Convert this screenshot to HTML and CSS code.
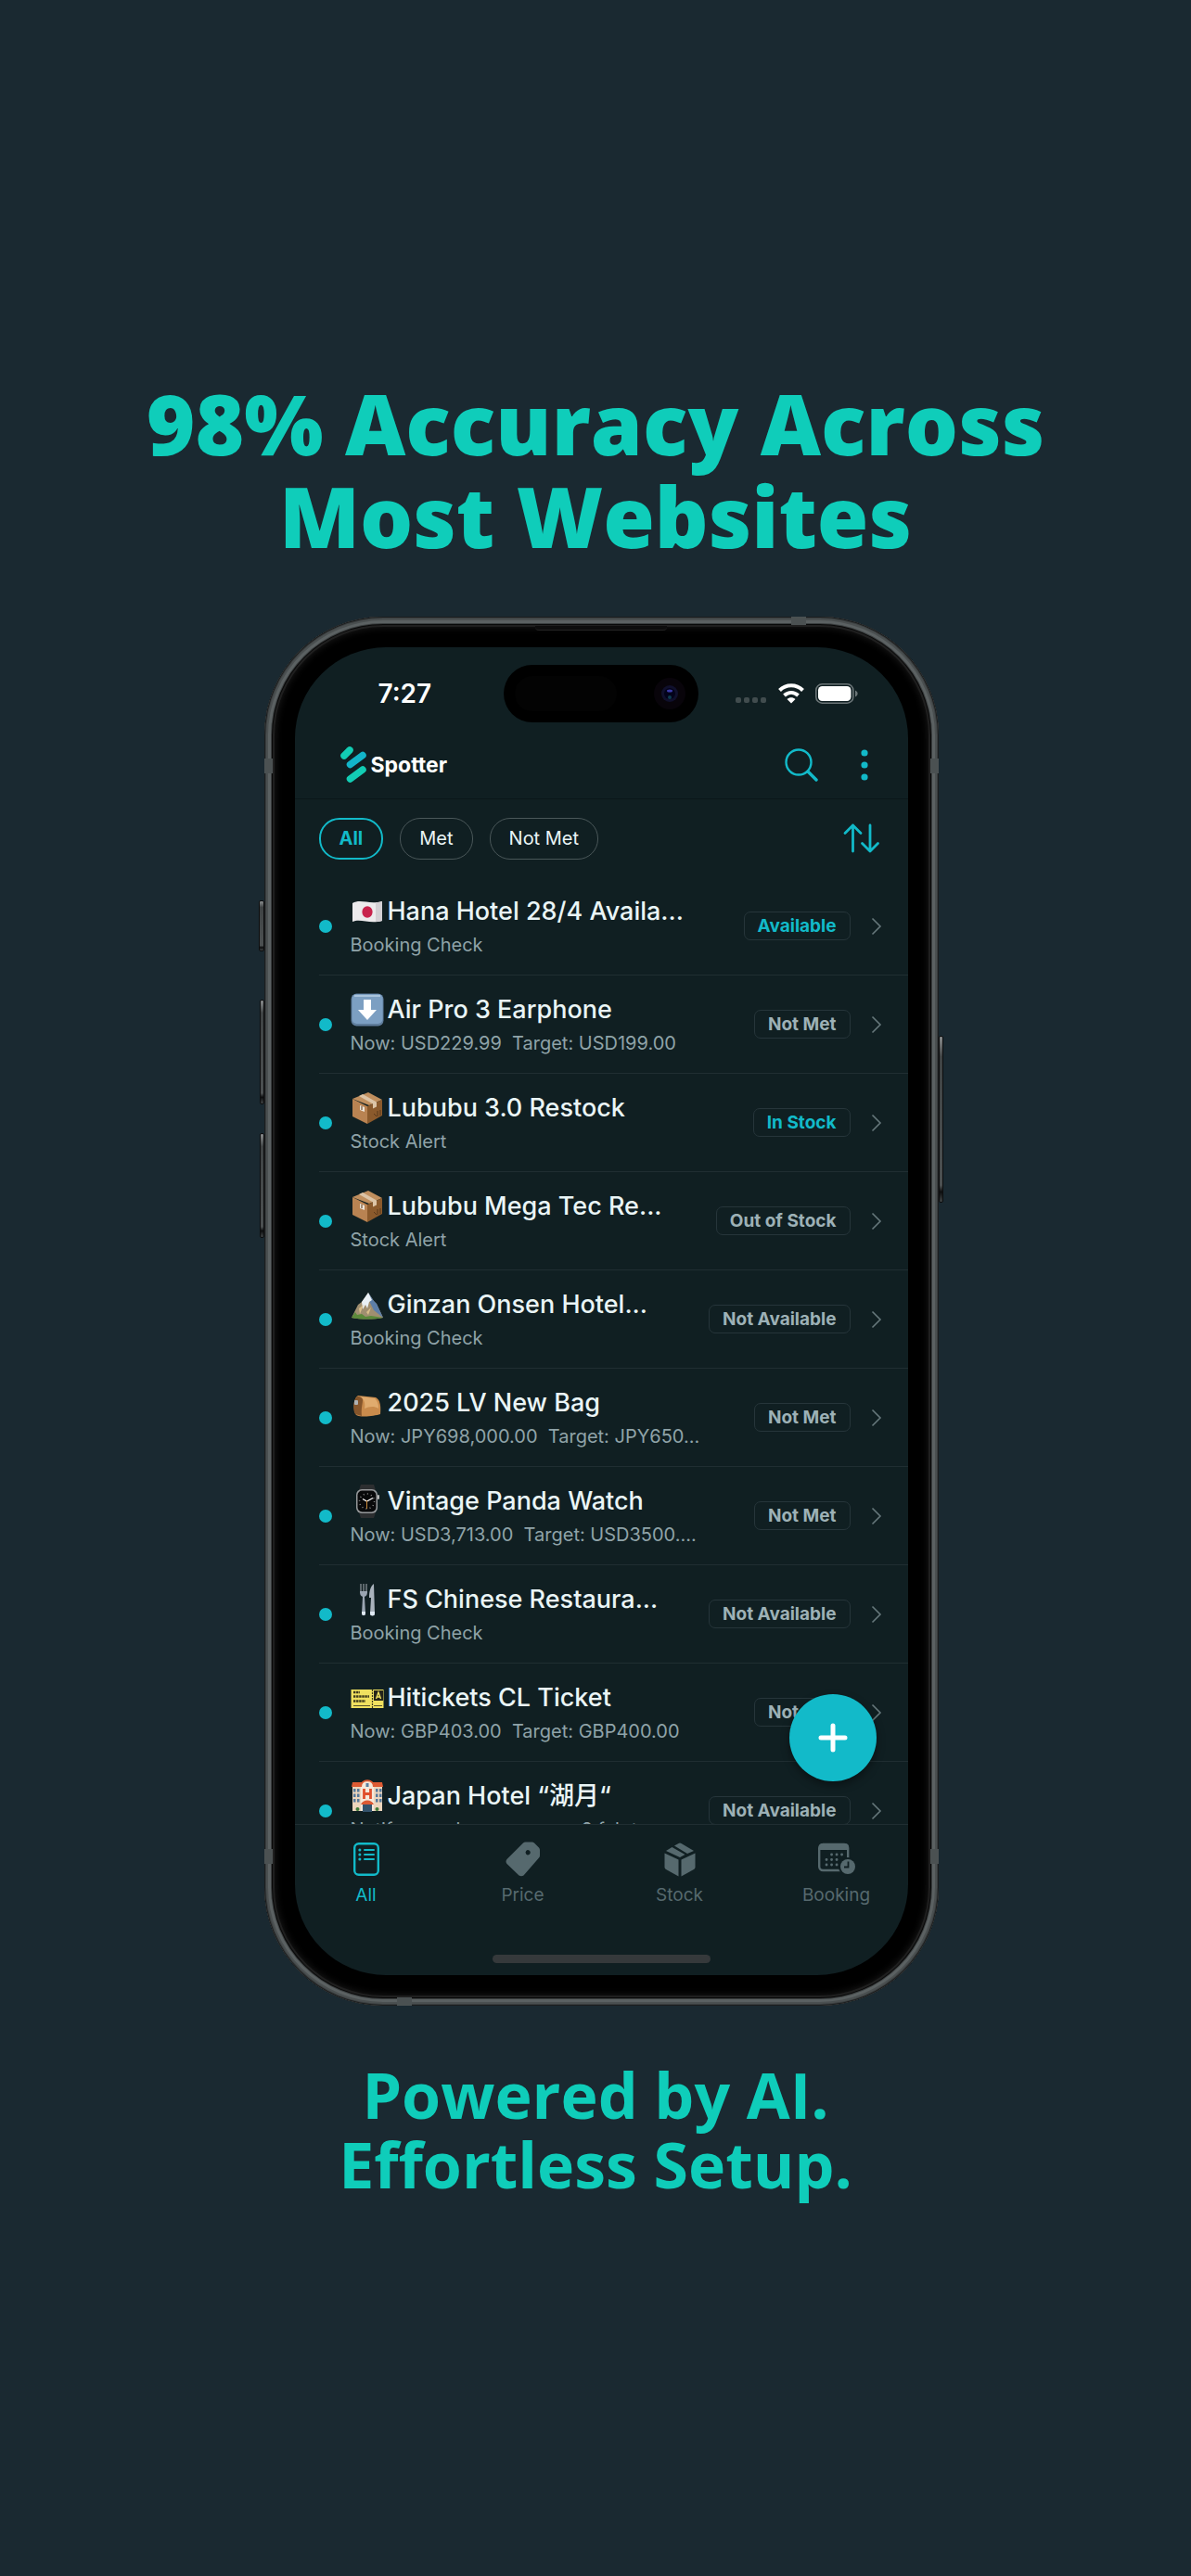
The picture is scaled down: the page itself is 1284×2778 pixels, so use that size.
FILE: index.html
```html
<!DOCTYPE html>
<html lang="en">
<head>
    <meta charset="utf-8">
    <meta name="viewport" content="width=device-width, initial-scale=1">
    <title>Spotter</title>
    <link rel="stylesheet" href="styles.css">
</head>
<body>
    <!-- Shared symbols -->
    <svg class="symbols" aria-hidden="true">
        <symbol id="chevron" viewBox="0 0 12 20">
            <path d="M1.5 1.5 10 10l-8.5 8.5" fill="none" stroke="currentColor" stroke-width="1.6"/>
        </symbol>
        <symbol id="box" viewBox="0 0 36 36">
            <path d="M19 1 34 9 20 15 2 8z" fill="#c08f5e"/>
            <path d="M2 8l16 8v19L2 27z" fill="#b98352"/>
            <path d="M18 16l16-7v17L18 35z" fill="#8b5a2c"/>
            <path d="M13 3l15 8.5v5l-4 2v-5L9 5z" fill="#dcc4a6"/>
            <path d="M10 15l5 2v5l-5-2z" fill="#eee5da"/>
            <path d="M12 16v4M25 24l3 3M29 21v6M32 20v6" stroke="#59381b" stroke-width="1"/>
        </symbol>
    </svg>

    <main class="poster">
        <h1>98% Accuracy Across<br>Most Websites</h1>

        <div class="phone">
            <span class="side-button action"></span>
            <span class="side-button volume-up"></span>
            <span class="side-button volume-down"></span>
            <span class="side-button power"></span>
            <span class="band band-left-top"></span>
            <span class="band band-right-top"></span>
            <span class="band band-left-bottom"></span>
            <span class="band band-right-bottom"></span>
            <span class="band band-top"></span>
            <span class="band band-bottom"></span>
            <span class="earpiece"></span>

            <div class="screen">
                <div class="status-bar">
                    <span class="time">7:27</span>
                    <div class="island">
                        <svg width="210" height="62" viewBox="0 0 210 62">
                            <rect x="12" y="12" width="110" height="38" rx="19" fill="#030303"/>
                            <circle cx="179" cy="31" r="17" fill="#08040a"/>
                            <circle cx="179" cy="31" r="9" fill="#10102c"/>
                            <circle cx="179" cy="31" r="6" fill="#03031a"/>
                            <ellipse cx="179" cy="28" rx="3" ry="1.5" fill="#3a3aa8"/>
                            <circle cx="179" cy="35" r="2" fill="#0d3b4e"/>
                        </svg>
                    </div>
                    <div class="signals">
                        <svg width="34" height="24" viewBox="0 0 34 24" fill="#414c4e">
                            <rect x="0" y="16" width="6" height="6" rx="2"/>
                            <rect x="9" y="16" width="6" height="6" rx="2"/>
                            <rect x="18" y="16" width="6" height="6" rx="2"/>
                            <rect x="27" y="16" width="6" height="6" rx="2"/>
                        </svg>
                        <svg width="28" height="22" viewBox="0 0 28 22">
                            <g fill="none" stroke="#fff" stroke-width="4">
                                <path d="M1.5 7.5C8.5 .5 19.5 .5 26.5 7.5"/>
                                <path d="M6.5 13c4.5-4 10.5-4 15 0"/>
                            </g>
                            <path d="M9.5 17c2.800-2.300 6.200-2.300 9 0L14 21.5z" fill="#fff"/>
                        </svg>
                        <svg width="46" height="22" viewBox="0 0 46 22">
                            <rect x=".8" y=".8" width="40" height="20.4" rx="6.5" fill="none" stroke="#6b7577" stroke-width="1.6"/>
                            <rect x="3" y="3" width="35.5" height="16" rx="4.5" fill="#fff"/>
                            <path d="M43 7.5c3.5 1.5 3.5 5.5 0 7z" fill="#6b7577"/>
                        </svg>
                    </div>
                </div>

                <header class="app-bar">
                    <a class="brand" href="#">
                        <svg width="30" height="41" viewBox="0 0 30 41" stroke-width="7.5" stroke-linecap="round">
                            <path d="M5 11l6-6" stroke="#12cdb4"/>
                            <path d="M11.5 20.5l13.5-10" stroke="#12b5c9"/>
                            <path d="M11.5 36l13.5-10" stroke="#12cdb4"/>
                        </svg>
                        <span>Spotter</span>
                    </a>
                    <div class="bar-actions">
                        <button type="button" aria-label="Search">
                            <svg width="36" height="36" viewBox="0 0 36 36" fill="none" stroke="#12bac9" stroke-linecap="round">
                                <circle cx="15" cy="15" r="13.5" stroke-width="2.4"/>
                                <path d="M25 25l9 9" stroke-width="3.4"/>
                            </svg>
                        </button>
                        <button type="button" aria-label="More">
                            <svg width="8" height="36" viewBox="0 0 8 36" fill="#12bac9">
                                <circle cx="4" cy="5" r="3.6"/>
                                <circle cx="4" cy="18" r="3.6"/>
                                <circle cx="4" cy="31" r="3.6"/>
                            </svg>
                        </button>
                    </div>
                </header>

                <div class="filters">
                    <button type="button" class="chip active">All</button>
                    <button type="button" class="chip">Met</button>
                    <button type="button" class="chip">Not Met</button>
                    <button type="button" class="sort" aria-label="Sort">
                        <svg width="40" height="32" viewBox="0 0 40 32" fill="none" stroke="#12bac9" stroke-width="2.8" stroke-linecap="round" stroke-linejoin="round">
                            <path d="M10.5 30V2M2 10.5L10.5 2l8.5 8.5"/>
                            <path d="M29 2v28M20.5 21.5L29 30l8.5-8.5"/>
                        </svg>
                    </button>
                </div>

                <div class="list-area">
                    <ul class="alerts">
                        <li><a class="alert" href="#">
                            <span class="dot"></span>
                            <div class="info">
                                <h2>
                                    <svg class="emoji" viewBox="0 0 36 36">
                                        <path d="M2 9c9-5 18 2 32-2v21c-14 4-23-3-32 1z" fill="#eceaec"/>
                                        <path d="M27 8c3 0 5 0 7-1v21c-2 1-4 1-7 1z" fill="#d3d0d4"/>
                                        <ellipse cx="18" cy="18.5" rx="5.6" ry="6.2" fill="#c8234c"/>
                                    </svg>
                                    Hana Hotel 28/4 Availa...
                                </h2>
                                <p>Booking Check</p>
                            </div>
                            <span class="badge good">Available</span>
                            <svg class="chevron"><use href="#chevron"/></svg>
                        </a></li>
                        <li><a class="alert" href="#">
                            <span class="dot"></span>
                            <div class="info">
                                <h2>
                                    <svg class="emoji" viewBox="0 0 36 36">
                                        <rect x=".5" y=".5" width="35" height="35" rx="6" fill="#5f7d9c"/>
                                        <rect x="1.5" y="1" width="33" height="32" rx="5" fill="#7c9fc2"/>
                                        <path d="M4 3h28" stroke="#a9c4dc" stroke-width="2"/>
                                        <path d="M14 7h8v11h6L18 29 8 18h6z" fill="#fff"/>
                                    </svg>
                                    Air Pro 3 Earphone
                                </h2>
                                <p>Now: USD229.99&nbsp; Target: USD199.00</p>
                            </div>
                            <span class="badge">Not Met</span>
                            <svg class="chevron"><use href="#chevron"/></svg>
                        </a></li>
                        <li><a class="alert" href="#">
                            <span class="dot"></span>
                            <div class="info">
                                <h2><svg class="emoji"><use href="#box"/></svg> Lububu 3.0 Restock</h2>
                                <p>Stock Alert</p>
                            </div>
                            <span class="badge good">In Stock</span>
                            <svg class="chevron"><use href="#chevron"/></svg>
                        </a></li>
                        <li><a class="alert" href="#">
                            <span class="dot"></span>
                            <div class="info">
                                <h2><svg class="emoji"><use href="#box"/></svg> Lububu Mega Tec Re...</h2>
                                <p>Stock Alert</p>
                            </div>
                            <span class="badge">Out of Stock</span>
                            <svg class="chevron"><use href="#chevron"/></svg>
                        </a></li>
                        <li><a class="alert" href="#">
                            <span class="dot"></span>
                            <div class="info">
                                <h2>
                                    <svg class="emoji" viewBox="0 0 36 36">
                                        <path d="M1 32 8 18l4-3 7-10 6 9 3 3 7 15c-10 2-24 2-34 0z" fill="#a08f70"/>
                                        <path d="M19 5l6 9 3 3 7 15-10-8-4-8z" fill="#5d7fa8"/>
                                        <path d="M12 15l7-10 4 8-3 2-2 7-2-4-3 5z" fill="#e9f0f5"/>
                                        <path d="M9 22l5-4-4 10zM17 26l5-5-3 8z" fill="#d9bf8a"/>
                                        <path d="M1 32l4-6 2 3 5-1 4 3 6-1 13 2c-10 2-24 2-34 0z" fill="#5b8a3a"/>
                                    </svg>
                                    Ginzan Onsen Hotel...
                                </h2>
                                <p>Booking Check</p>
                            </div>
                            <span class="badge">Not Available</span>
                            <svg class="chevron"><use href="#chevron"/></svg>
                        </a></li>
                        <li><a class="alert" href="#">
                            <span class="dot"></span>
                            <div class="info">
                                <h2>
                                    <svg class="emoji" viewBox="0 0 36 36">
                                        <path d="M8 10l19 2c4 2 6 7 5 18-6 2-20 4-26 1-4-6-3-18 2-21z" fill="#c98b4c"/>
                                        <path d="M10 11l16 2c3 3 4 6 4 11-5-3-10-2-15 0 1-5 0-10-5-13z" fill="#e0ab6e"/>
                                        <path d="M7 11c-4 3-5 15-2 19l7 2c-1-8 1-13 1-17 0-2-2-4-6-4z" fill="#85552b"/>
                                        <rect x="4" y="15" width="4" height="5" rx="1" fill="#adb1b3"/>
                                    </svg>
                                    2025 LV New Bag
                                </h2>
                                <p>Now: JPY698,000.00&nbsp; Target: JPY650...</p>
                            </div>
                            <span class="badge">Not Met</span>
                            <svg class="chevron"><use href="#chevron"/></svg>
                        </a></li>
                        <li><a class="alert" href="#">
                            <span class="dot"></span>
                            <div class="info">
                                <h2>
                                    <svg class="emoji" viewBox="0 0 36 36">
                                        <path d="M11 0h14l2 6H9zM9 30h18l-2 6H11z" fill="#2c2e30"/>
                                        <rect x="6" y="5" width="23" height="26" rx="6" fill="#96999b"/>
                                        <rect x="7.5" y="6.500" width="20" height="23" rx="5" fill="#08090a"/>
                                        <rect x="29" y="11" width="2" height="5" rx="1" fill="#b5b5b5"/>
                                        <circle cx="17.5" cy="18" r="8" fill="none" stroke="#8d8d8d" stroke-width="1.5" stroke-dasharray="1 3.2"/>
                                        <path d="M13 15.5l4.5 2.5 6.500-3.500" fill="none" stroke="#fff" stroke-width="1.2"/>
                                        <path d="M17.5 17v9" stroke="#c98a3a" stroke-width="1"/>
                                    </svg>
                                    Vintage Panda Watch
                                </h2>
                                <p>Now: USD3,713.00&nbsp; Target: USD3500....</p>
                            </div>
                            <span class="badge">Not Met</span>
                            <svg class="chevron"><use href="#chevron"/></svg>
                        </a></li>
                        <li><a class="alert" href="#">
                            <span class="dot"></span>
                            <div class="info">
                                <h2>
                                    <svg class="emoji" viewBox="0 0 36 36">
                                        <path d="M11 1v10M14 1v10M17 1v10" stroke="#7f868c" stroke-width="1.4"/>
                                        <path d="M10 9h8c0 4-1 5-3 6l1 18c0 3-4 3-4 0l1-18c-2-1-3-2-3-6z" fill="#9aa5b2"/>
                                        <path d="M25 1c-4 3-5 9-5 15h2l-1 17c0 3 5 3 5 0z" fill="#a9b2bc"/>
                                        <path d="M12 31h4v2a2 2 0 0 1-4 0zM21 31h5v2a2 2 0 0 1-5 0z" fill="#dfe8f3"/>
                                    </svg>
                                    FS Chinese Restaura...
                                </h2>
                                <p>Booking Check</p>
                            </div>
                            <span class="badge">Not Available</span>
                            <svg class="chevron"><use href="#chevron"/></svg>
                        </a></li>
                        <li><a class="alert" href="#">
                            <span class="dot"></span>
                            <div class="info">
                                <h2>
                                    <svg class="emoji" viewBox="0 0 36 36">
                                        <rect x=".5" y="9" width="35" height="20" fill="#f0e05f"/>
                                        <rect x="25" y="10" width="10" height="11" fill="#25241a"/>
                                        <path d="M27.5 19l2.5-7 2.5 7M28.5 17h3" fill="none" stroke="#f0e05f" stroke-width="1.4"/>
                                        <path d="M3 12h7M3 16.5h17M3 21.5h13" stroke="#3e3a1c" stroke-width="2.4" stroke-dasharray="2.4 .7"/>
                                        <path d="M3 26.5h18M25 26.5h9" stroke="#57502a" stroke-width="1.2"/>
                                        <path d="M23.5 9v20" stroke="#3e3a1c" stroke-width="1.2" stroke-dasharray="2 1"/>
                                    </svg>
                                    Hitickets CL Ticket
                                </h2>
                                <p>Now: GBP403.00&nbsp; Target: GBP400.00</p>
                            </div>
                            <span class="badge">Not Met</span>
                            <svg class="chevron"><use href="#chevron"/></svg>
                        </a></li>
                        <li><a class="alert" href="#">
                            <span class="dot"></span>
                            <div class="info">
                                <h2>
                                    <svg class="emoji" viewBox="0 0 36 36">
                                        <path d="M2 7h32v27H2z" fill="#ecd5bd"/>
                                        <path d="M2 3h32l1 5H1z" fill="#dd5a33"/>
                                        <path d="M11 34V8c0-9 14-9 14 0v26z" fill="#f5e8da"/>
                                        <path d="M11 8c0-9 14-9 14 0" fill="none" stroke="#dd5a33" stroke-width="2"/>
                                        <rect x="16.5" y="4" width="3" height="4" fill="#5a7e9e"/>
                                        <path d="M14.5 10v11M21.5 10v11M14.5 15.5h7" stroke="#e04f2c" stroke-width="2.8"/>
                                        <g fill="#55799b">
                                            <path d="M3 10h2.5v3.5H3zM7 10h2.5v3.5H7zM3 15.5h2.5V19H3zM7 15.5h2.5V19H7zM3 21h2.5v3.5H3zM7 21h2.5v3.5H7z"/>
                                            <path d="M27 10h2.5v3.5H27zM31 10h2.5v3.5H31zM27 15.5h2.5V19H27zM31 15.5h2.5V19H31zM27 21h2.5v3.5H27zM31 21h2.5v3.5H31z"/>
                                        </g>
                                        <path d="M13 27h10v8H13z" fill="#34536c"/>
                                        <path d="M11 27c2-6 12-6 14 0z" fill="#dd5a33"/>
                                        <circle cx="7.5" cy="32" r="2" fill="#3d7a37"/>
                                        <circle cx="28.5" cy="32" r="2" fill="#3d7a37"/>
                                    </svg>
                                    Japan Hotel “湖月“
                                </h2>
                                <p>Notify me when rooms on 2 feb to...</p>
                            </div>
                            <span class="badge">Not Available</span>
                            <svg class="chevron"><use href="#chevron"/></svg>
                        </a></li>
                    </ul>
                    <button type="button" class="add" aria-label="Add alert">
                        <svg width="32" height="32" viewBox="0 0 32 32" stroke="#fff" stroke-width="5" stroke-linecap="round">
                            <path d="M16 3v26M3 16h26"/>
                        </svg>
                    </button>
                </div>

                <nav class="tab-bar">
                    <div class="tabs">
                        <button type="button" class="tab active">
                            <svg width="40" height="38" viewBox="0 0 40 38" fill="none" stroke="currentColor" stroke-linecap="round">
                                <rect x="7.2" y="2.2" width="25.6" height="33.6" rx="4.5" stroke-width="2.4"/>
                                <path d="M18 9h10M18 14h10M18 19h10" stroke-width="2"/>
                                <path d="M12.8 9h.1M12.8 14h.1M12.8 19h.1" stroke-width="3"/>
                            </svg>
                            All
                        </button>
                        <button type="button" class="tab">
                            <svg width="40" height="38" viewBox="0 0 40 38" fill="currentColor">
                                <path fill-rule="evenodd" d="M20 1.5Q21 .5 22.5 .5h7q1.5 0 2.5 1l5 5q1 1 1 2.500v6q0 1.500-1 2.500L20.5 36.5q-2.500 1.500-5 0l-13-12.500q-2-2.500 0-5zM26.500 9.500a2.600 2.600 0 1 0 0 4.500 2.600 2.600 0 0 0 0-4.500z"/>
                            </svg>
                            Price
                        </button>
                        <button type="button" class="tab">
                            <svg width="40" height="38" viewBox="0 0 40 38" fill="currentColor">
                                <path d="M18.5 19.500V37.500L5 30q-1.500-1-1.500-2.500V12.500z"/>
                                <path d="M21.5 19.500V37.500L35 30q1.500-1 1.500-2.500V12.500z"/>
                                <path d="M11.500 6l14 8-5.500 3L5 10z"/>
                                <path d="M14 4.500L18.500 2q1.500-.8 3 0L35 10l-7 3z"/>
                            </svg>
                            Stock
                        </button>
                        <button type="button" class="tab">
                            <svg width="40" height="38" viewBox="0 0 40 38">
                                <rect x="1.2" y="3" width="31" height="28" rx="4" fill="none" stroke="currentColor" stroke-width="2.4"/>
                                <path d="M1 8V6q0-4 4-4h24q4 0 4 4v3H1z" fill="currentColor"/>
                                <path d="M14.5 14h13M9 19.5h13M9 25h13" stroke="currentColor" stroke-width="2.8" stroke-linecap="round" stroke-dasharray=".1 5.4"/>
                                <circle cx="32" cy="27" r="10" fill="#101f22"/>
                                <circle cx="32" cy="27" r="8" fill="currentColor"/>
                                <path d="M32.5 21.5v6H28" fill="none" stroke="#101f22" stroke-width="1.8"/>
                            </svg>
                            Booking
                        </button>
                    </div>
                    <div class="home-indicator"></div>
                </nav>
            </div>
        </div>

        <p class="caption">Powered by AI.<br>Effortless Setup.</p>
    </main>
</body>
</html>
```
FILE: styles.css
```css
* {
    margin: 0;
    padding: 0;
    box-sizing: border-box;
}

body {
    background-color: #1a2931;
    font-family: 'Inter', 'Noto Sans CJK JP', sans-serif;
}

button {
    background: none;
    border: none;
    color: inherit;
    font: inherit;
    cursor: pointer;
}

svg {
    display: block;
    flex: none;
}

.symbols {
    position: absolute;
    width: 0;
    height: 0;
}

.poster {
    min-height: 100vh;
    padding: 406px 24px 0;
    display: flex;
    flex-direction: column;
    align-items: center;
    color: #0fcdba;
    font-family: 'Open Sans', sans-serif;
    text-align: center;
}

h1 {
    font-size: 90px;
    font-weight: 800;
    line-height: 100px;
}

.caption {
    margin-top: 58px;
    font-size: 68px;
    font-weight: 700;
    line-height: 75px;
}

/* Phone body */
.phone {
    position: relative;
    width: 100%;
    max-width: 727px;
    margin-top: 59px;
    margin-left: 12px;
    padding: 33px;
    border-radius: 128px;
    background-color: #000;
    box-shadow:
        inset 0 0 0 1px #1c1e1f,
        inset 0 0 0 2px #3a3e3f,
        inset 0 0 0 4px #4a4f50,
        inset 0 0 0 7px #5b6162,
        inset 0 0 0 8px #3a3e3f,
        inset 0 0 0 9px #080808,
        inset 0 0 0 11px #1f1f1f,
        inset 0 0 8px 11px #1c1c1c;
}

.side-button {
    position: absolute;
    width: 5px;
    border: 1px solid #0c0d0e;
    border-radius: 2px;
    background: linear-gradient(#8a8d8e, #3f4344 12%, #4c5051 90%, #0c0d0e 94%, #3f4344);
}

.action {
    left: -6px;
    width: 6px;
    top: 306px;
    height: 55px;
}

.volume-up {
    left: -5px;
    top: 413px;
    height: 113px;
}

.volume-down {
    left: -5px;
    top: 557px;
    height: 113px;
}

.power {
    right: -5px;
    top: 452px;
    height: 180px;
}

.band {
    position: absolute;
    width: 9px;
    height: 16px;
    background-color: #4b5152;
}

.band-left-top {
    left: 0;
    top: 153px;
}

.band-right-top {
    right: 0;
    top: 153px;
}

.band-left-bottom {
    left: 0;
    bottom: 153px;
}

.band-right-bottom {
    right: 0;
    bottom: 153px;
}

.band-top,
.band-bottom {
    width: 16px;
    height: 9px;
}

.band-top {
    right: 143px;
    top: 0;
}

.band-bottom {
    left: 143px;
    bottom: 0;
}

.earpiece {
    position: absolute;
    top: 10px;
    left: 50%;
    width: 142px;
    height: 5px;
    margin-left: -71px;
    border-radius: 0 0 4px 4px;
    background-color: #0d0d0d;
    border-bottom: 1px solid #222;
}

.screen {
    display: flex;
    flex-direction: column;
    aspect-ratio: 661 / 1432;
    overflow: hidden;
    border-radius: 98px;
    background-color: #101f22;
    color: #eaf5f6;
    font-family: 'Inter', 'Noto Sans CJK JP', sans-serif;
    text-align: left;
}

/* Status bar */
.status-bar {
    height: 90px;
    padding-top: 10px;
    display: grid;
    grid-template-columns: 1fr 210px 1fr;
    align-items: center;
    flex: none;
}

.time {
    padding-left: 90px;
    font-size: 28px;
    font-weight: 600;
    line-height: 36px;
    color: #fff;
}

.island {
    height: 62px;
    border-radius: 31px;
    background-color: #000;
}

.signals {
    display: flex;
    align-items: center;
    justify-content: flex-end;
    gap: 12px;
    padding-right: 54px;
}

/* App bar */
.app-bar {
    height: 74px;
    padding: 0 43px 0 48px;
    display: flex;
    align-items: center;
    justify-content: space-between;
    flex: none;
    border-bottom: 1px solid #0b1719;
}

.brand {
    display: flex;
    align-items: center;
    gap: 4px;
    color: #fff;
    font-size: 23px;
    font-weight: 700;
    text-decoration: none;
}

.bar-actions {
    display: flex;
    gap: 46px;
}

/* Filters */
.filters {
    height: 84px;
    padding: 0 30px 0 26px;
    display: flex;
    align-items: center;
    gap: 18px;
    flex: none;
}

.chip {
    height: 45px;
    padding: 0 20px;
    border: 1px solid #4a5759;
    border-radius: 22px;
    font-size: 20px;
}

.chip.active {
    border: 2px solid #12bac9;
    color: #12bac9;
    font-weight: 700;
}

.sort {
    margin-left: auto;
}

/* Alerts list */
.list-area {
    position: relative;
    flex: 1;
    min-height: 0;
}

.alerts {
    height: 100%;
    overflow: hidden;
    list-style: none;
}

.alerts li {
    margin-left: 26px;
    border-bottom: 1px solid #202e32;
}

.alert {
    display: flex;
    align-items: center;
    height: 105px;
    padding-right: 28px;
    color: inherit;
    text-decoration: none;
}

.dot {
    flex: none;
    width: 14px;
    height: 14px;
    margin-right: 20px;
    border-radius: 50%;
    background-color: #12bac9;
}

.info {
    flex: 1;
    min-width: 0;
    white-space: nowrap;
}

.info h2 {
    display: flex;
    align-items: center;
    gap: 4px;
    margin-bottom: 4px;
    font-size: 27px;
    font-weight: 500;
    line-height: 36px;
}

.info p {
    font-size: 20px;
    line-height: 28px;
    color: #8fa3a8;
}

.emoji {
    width: 36px;
    height: 36px;
}

.badge {
    flex: none;
    height: 31px;
    padding: 0 14px;
    border: 1px solid #26353a;
    border-radius: 7px;
    color: #9db1b6;
    font-size: 19px;
    font-weight: 700;
    line-height: 29px;
}

.badge.good {
    color: #12bac9;
}

.chevron {
    width: 12px;
    height: 20px;
    margin-left: 22px;
    color: #66777b;
}

.add {
    position: absolute;
    right: 34px;
    bottom: 46px;
    width: 94px;
    height: 94px;
    display: flex;
    align-items: center;
    justify-content: center;
    border-radius: 50%;
    background-color: #12bac9;
    box-shadow: 0 4px 10px rgba(0, 0, 0, 0.4);
}

/* Tab bar */
.tab-bar {
    height: 163px;
    padding-bottom: 13px;
    display: flex;
    flex-direction: column;
    align-items: center;
    justify-content: space-between;
    flex: none;
    border-top: 1px solid #202e32;
}

.tabs {
    width: 100%;
    padding: 18px 34px 0;
    display: flex;
    justify-content: space-between;
}

.tab {
    width: 86px;
    display: flex;
    flex-direction: column;
    align-items: center;
    gap: 8px;
    color: #56696e;
    font-size: 19px;
    line-height: 24px;
}

.tab.active {
    color: #12bac9;
}

.home-indicator {
    width: 235px;
    height: 9px;
    border-radius: 5px;
    background-color: #35393b;
}
```
